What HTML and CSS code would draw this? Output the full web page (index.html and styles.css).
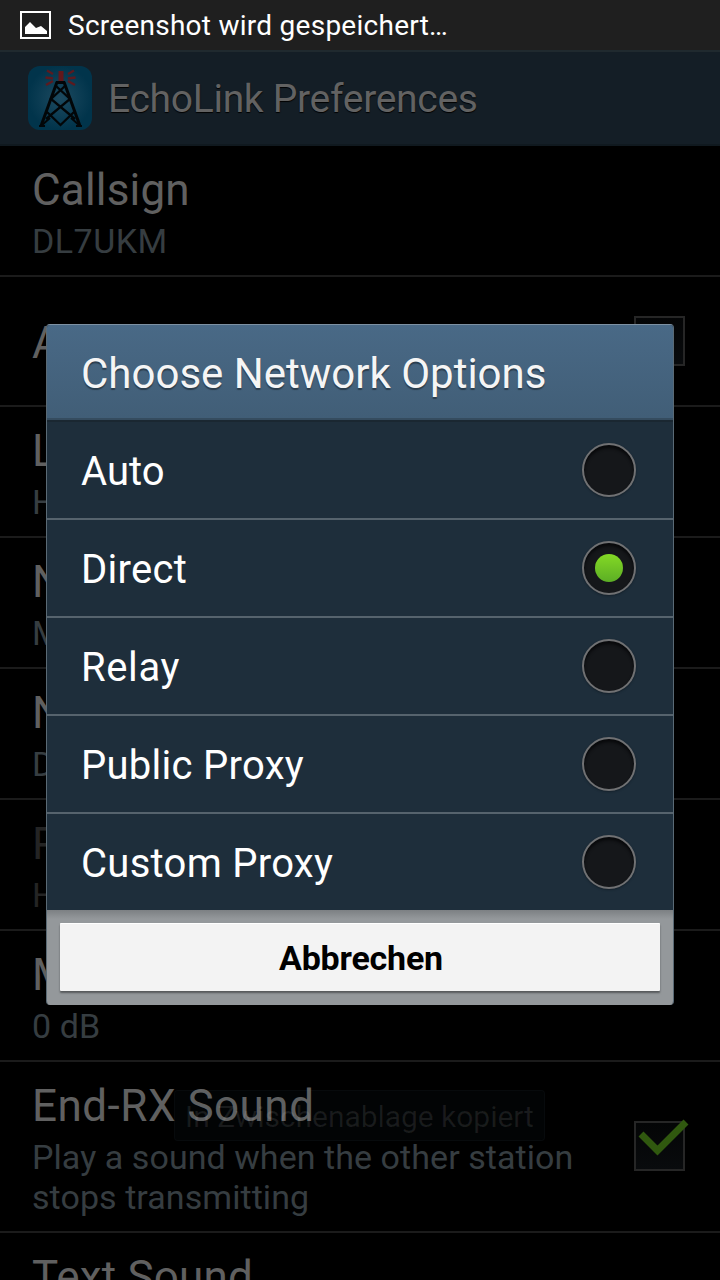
FILE: index.html
```
<!DOCTYPE html>
<html lang="de">
<head>
<meta charset="utf-8">
<title>EchoLink Preferences</title>
<link rel="stylesheet" href="styles.css">
</head>
<body>
<div class="screen">
  <div class="status">
    <svg class="status-icon" width="31" height="28" viewBox="0 0 31 28">
      <rect x="1" y="1" width="29" height="26" fill="none" stroke="#fff" stroke-width="2"/>
      <path d="M5 23V16L10 11L16 17L21 15L27 20V23Z" fill="#fff"/>
    </svg>
    <span class="status-text">Screenshot wird gespeichert…</span>
  </div>
  <header class="bar">
    <svg class="app-icon" width="64" height="64" viewBox="0 0 64 64">
      <defs><radialGradient id="glow"><stop offset="0" stop-color="#1d4a60"/><stop offset="1" stop-color="#01344b"/></radialGradient></defs>
      <rect width="64" height="64" rx="12" fill="url(#glow)"/>
      <path d="M19 4.500L25 8M17.500 11.500L25 12.500M18 19L25 15M46 4.500L40 8M47.500 11.500L40 12.500M47 19L40 15" fill="none" stroke="#5c1a1f" stroke-width="2.300"/>
      <rect x="30.500" y="5" width="5" height="10" fill="#63171b"/>
      <path d="M28 16.500H37" fill="none" stroke="#020608" stroke-width="3"/>
      <path d="M29 16L13 60M36 16L52 60" fill="none" stroke="#020608" stroke-width="3"/>
      <path d="M28 20L42 33L18 53M37 20L23 33L47 53M19 46L32.500 59L46 46" fill="none" stroke="#020608" stroke-width="2.300"/>
      <path d="M11 60H17M48 60H54M14 59L22 52M51 59L43 52" stroke="#020608" stroke-width="2"/>
    </svg>
    <h1 class="bar-title">EchoLink Preferences</h1>
  </header>
  <main class="prefs">
    <section class="pref"><div class="label"><div class="name">Callsign</div><div class="summary code">DL7UKM</div></div></section>
    <section class="pref single"><div class="label"><div class="name">A</div></div><div class="check"></div></section>
    <section class="pref"><div class="label"><div class="name">L</div><div class="summary">H</div></div></section>
    <section class="pref"><div class="label"><div class="name">N</div><div class="summary">M</div></div></section>
    <section class="pref"><div class="label"><div class="name">N</div><div class="summary">D</div></div></section>
    <section class="pref disabled"><div class="label"><div class="name">P</div><div class="summary">H</div></div></section>
    <section class="pref"><div class="label"><div class="name">M</div><div class="summary">0 dB</div></div></section>
    <section class="pref tall"><div class="label"><div class="name">End-RX Sound</div><div class="summary">Play a sound when the other station<br>stops transmitting</div></div>
      <div class="check"><svg class="tick" width="52" height="38" viewBox="0 0 52 38"><path d="M3 16L19.500 32.500L48 4" fill="none" stroke="#30580f" stroke-width="7"/></svg></div>
    </section>
    <section class="pref"><div class="label"><div class="name">Text Sound</div></div></section>
  </main>
  <div class="toast"><span class="toast-text">In Zwischenablage kopiert</span></div>
  <div class="dialog" role="dialog">
    <h2 class="dialog-title"><span class="dialog-title-text">Choose Network Options</span></h2>
    <div class="option first"><span class="option-text">Auto</span><i class="radio"></i></div>
    <div class="option"><span class="option-text spaced">Direct</span><i class="radio on"></i></div>
    <div class="option"><span class="option-text wide">Relay</span><i class="radio"></i></div>
    <div class="option"><span class="option-text spaced">Public Proxy</span><i class="radio"></i></div>
    <div class="option"><span class="option-text spaced">Custom Proxy</span><i class="radio"></i></div>
    <div class="footer"><button class="cancel">Abbrechen</button></div>
  </div>
</div>
</body>
</html>
```
FILE: styles.css
```
* { box-sizing: border-box; }
body { margin: 0; background: #000; font-family: Roboto, "Liberation Sans", sans-serif; }
.screen { position: relative; width: 720px; height: 1280px; overflow: hidden; background: #000; }
.status { height: 50px; background: #1f1f1f; display: flex; align-items: center; padding-left: 20px; gap: 17px; }
.status-text { color: #fff; font-size: 28px; line-height: 34px; letter-spacing: .26px; padding-top: 1px; }
.bar { height: 96px; background: #141e26; border-top: 2px solid #202a2f; border-bottom: 2px solid #10191f; display: flex; align-items: center; padding-left: 28px; gap: 16px; }
.bar-title { margin: 0; padding-top: 2px; font-size: 39px; font-weight: 400; line-height: 48px; letter-spacing: -.3px; color: #626262; text-shadow: 0 1px 1px #000; }
.prefs { display: flex; flex-direction: column; }
.pref { flex: none; height: 131px; border-bottom: 2px solid #1b1b1b; padding: 18px 35px 0 32px; display: flex; justify-content: space-between; }
.pref.single { height: 130px; padding-top: 0; align-items: center; }
.single .name { padding-top: 3px; }
.pref.tall { height: 171px; }
.tall .check { align-self: center; margin-top: -20px; }
.name { font-size: 44px; line-height: 52px; letter-spacing: .18px; color: #606060; }
.tall .name { letter-spacing: .5px; }
.summary { margin-top: 5px; font-size: 34px; line-height: 40px; letter-spacing: .06px; color: #363d41; white-space: nowrap; }
.summary.code { letter-spacing: .5px; }
.disabled .name, .disabled .summary { color: #242424; }
.check { position: relative; width: 51px; height: 50px; border: 2px solid #262626; background: linear-gradient(#040506, #090b0d); }
.tick { position: absolute; left: 2px; top: -5px; }
.toast { position: absolute; left: 174px; top: 1090px; width: 371px; height: 51px; border: 1px solid rgba(150, 180, 210, .04); border-radius: 4px; background: rgba(50, 90, 130, .04); display: flex; align-items: center; justify-content: center; }
.toast-text { font-size: 30px; color: rgba(255, 255, 255, .09); white-space: nowrap; letter-spacing: -.04px; padding-top: 1px; }
.dialog { position: absolute; left: 46px; top: 324px; width: 628px; height: 681px; border: 1px solid #5a6a75; border-bottom: 0; border-top-color: #7d91a3; border-radius: 4px; overflow: hidden; background: #1e2e3b; display: flex; flex-direction: column; }
.dialog-title { margin: 0; height: 95px; padding: 0 0 0 34px; background: linear-gradient(#496986, #415e77); border-bottom: 2px solid #354c5f; color: #f5f5f5; font-weight: 400; font-size: 42px; line-height: 97px; text-shadow: 0 2px 1px #2b3d4d; }
.option { height: 98px; border-top: 2px solid #56636d; padding: 0 37px 0 34px; display: flex; align-items: center; justify-content: space-between; }
.option.first { border-top-color: #1a2731; }
.option-text { color: #fff; font-size: 40px; line-height: 48px; padding-top: 3px; }
.spaced { letter-spacing: .28px; }
.wide { letter-spacing: .6px; }
.radio { width: 54px; height: 54px; border: 2px solid #707173; border-radius: 50%; background: #15171a; box-shadow: inset 0 3px 3px #08090b, 0 1px 2px #14202a; display: flex; align-items: center; justify-content: center; }
.on::after { content: ""; width: 28px; height: 28px; border-radius: 50%; background: linear-gradient(#84d925, #5cae25); }
.footer { flex: none; height: 95px; margin: 0 -1px; padding: 13px 14px; background: linear-gradient(#7c8083, #94989b 9px, #94989b); }
.cancel { display: block; width: 600px; height: 68px; border: 0; border-top: 1px solid #fff; border-radius: 1px; padding: 1px 0 0 2px; background: #f3f3f3; box-shadow: 0 2px 2px #56595b; font: bold 34px Roboto, "Liberation Sans", sans-serif; letter-spacing: -.2px; color: #000; }
```
